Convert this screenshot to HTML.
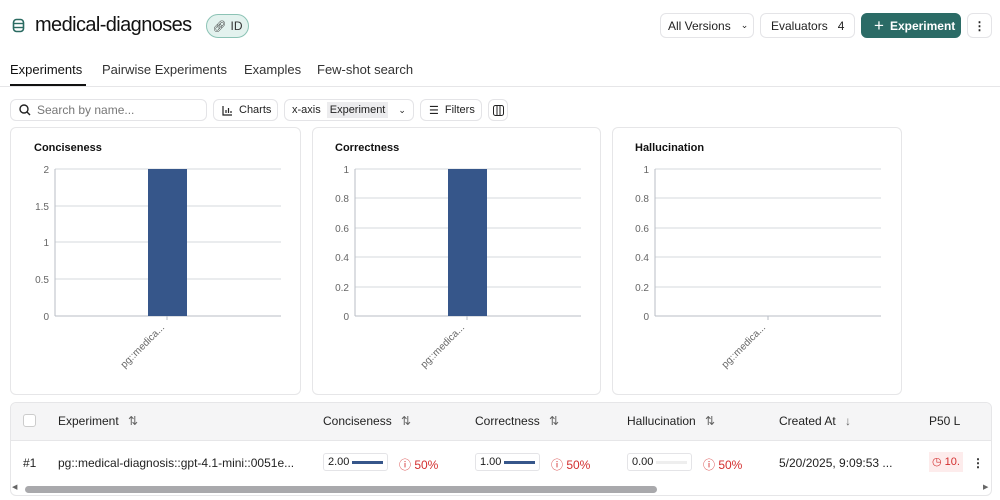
<!DOCTYPE html>
<html><head><meta charset="utf-8"><style>
*{box-sizing:border-box;margin:0;padding:0}
body{width:1000px;height:500px;background:#fff;font-family:"Liberation Sans",sans-serif;color:#1a1a1a;position:relative;overflow:hidden}
.a{position:absolute}
.btn{position:absolute;border:1px solid #e4e4e7;border-radius:6px;background:#fff;font-size:12px;display:flex;align-items:center;color:#222;white-space:nowrap}
.card{position:absolute;top:127px;height:268px;border:1px solid #e6e6e8;border-radius:6px;background:#fff}
.th{position:absolute;top:414px;font-size:12px;color:#222;white-space:nowrap}
.td{position:absolute;top:456px;font-size:12px;color:#222;white-space:nowrap}
.red{color:#d32f2f}
.mini{position:absolute;top:453px;width:65px;height:18px;border:1px solid #e4e4e7;border-radius:3px;font-size:11px;padding:0 4px;display:flex;align-items:center;white-space:nowrap}
.mini span{display:inline-block;width:32px;height:3px;background:#36568a;margin-left:3px}
</style></head><body>
<!-- header -->
<svg class="a" style="left:12px;top:18px" width="13" height="15" viewBox="0 0 13 15"><rect x="1.5" y="1.5" width="10" height="12" rx="3" fill="none" stroke="#2b6b62" stroke-width="1.6"/><line x1="2" y1="5.5" x2="11" y2="5.5" stroke="#2b6b62" stroke-width="1.4"/><line x1="2" y1="9.5" x2="11" y2="9.5" stroke="#2b6b62" stroke-width="1.4"/></svg>
<div class="a" style="left:35px;top:14px;font-size:20px;letter-spacing:-0.6px;color:#111;white-space:nowrap">medical-diagnoses</div>
<div class="a" style="left:206px;top:14px;width:43px;height:24px;border:1px solid #8cc3b5;background:#e3f2ee;border-radius:12px;font-size:12px;display:flex;align-items:center;justify-content:center;gap:4px;color:#333"><span style="font-size:11px">🔗︎</span>ID</div>
<div class="btn" style="left:660px;top:13px;width:94px;height:25px;padding-left:7px">All Versions <span style="margin-left:10px;font-size:9px">⌄</span></div>
<div class="btn" style="left:760px;top:13px;width:95px;height:25px;padding-left:10px">Evaluators <span style="margin-left:10px">4</span></div>
<div class="btn" style="left:861px;top:13px;width:100px;height:25px;background:#2b6b66;border-color:#2b6b66;color:#fff;font-weight:bold;padding-left:12px"><span style="font-size:17px;font-weight:normal;margin-right:6px">+</span>Experiment</div>
<div class="btn" style="left:967px;top:13px;width:25px;height:25px;justify-content:center;font-weight:bold">⋮</div>
<!-- tabs -->
<div class="a" style="left:10px;top:62px;font-size:13px;color:#111">Experiments</div>
<div class="a" style="left:10px;top:84px;width:76px;height:2px;background:#111"></div>
<div class="a" style="left:102px;top:62px;font-size:13px;color:#333">Pairwise Experiments</div>
<div class="a" style="left:244px;top:62px;font-size:13px;color:#333">Examples</div>
<div class="a" style="left:317px;top:62px;font-size:13px;color:#333">Few-shot search</div>
<div class="a" style="left:0;top:86px;width:1000px;height:1px;background:#e6e6e8"></div>
<!-- toolbar -->
<div class="btn" style="left:10px;top:99px;width:197px;height:22px;padding-left:8px;color:#777"><svg width="12" height="12" style="margin-right:6px"><circle cx="5" cy="5" r="4" fill="none" stroke="#222" stroke-width="1.4"/><line x1="8" y1="8" x2="11" y2="11" stroke="#222" stroke-width="1.4"/></svg>Search by name...</div>
<div class="btn" style="left:213px;top:99px;width:65px;height:22px;padding-left:8px;font-size:11px"><svg width="11" height="11" style="margin-right:6px"><path d="M1 1v9h9M4 8V5M6.5 8V3M9 8V6" fill="none" stroke="#222" stroke-width="1.2"/></svg>Charts</div>
<div class="btn" style="left:284px;top:99px;width:130px;height:22px;padding-left:7px;font-size:11px">x-axis <span style="background:#ececee;padding:2px 3px;margin-left:6px">Experiment</span><span style="margin-left:10px;font-size:9px">⌄</span></div>
<div class="btn" style="left:420px;top:99px;width:62px;height:22px;padding-left:8px;font-size:11px"><span style="margin-right:6px">☰</span>Filters</div>
<div class="btn" style="left:488px;top:99px;width:20px;height:22px;justify-content:center"><svg width="11" height="11"><rect x="0.5" y="0.5" width="10" height="10" rx="2" fill="none" stroke="#222"/><line x1="4" y1="1" x2="4" y2="10" stroke="#222"/><line x1="7" y1="1" x2="7" y2="10" stroke="#222"/></svg></div>
<!-- cards -->
<div class="card" style="left:10px;width:291px"></div>
<div class="card" style="left:312px;width:289px"></div>
<div class="card" style="left:612px;width:290px"></div>
<svg class="a" style="left:0;top:0" width="1000" height="400" font-family="Liberation Sans, sans-serif">
<g font-size="11" font-weight="bold" fill="#111"><text x="34" y="151">Conciseness</text><text x="335" y="151">Correctness</text><text x="635" y="151">Hallucination</text></g>
<g stroke="#dde0e4" stroke-width="1.2">
<line x1="55" y1="169" x2="281" y2="169"/><line x1="55" y1="206" x2="281" y2="206"/><line x1="55" y1="242" x2="281" y2="242"/><line x1="55" y1="279" x2="281" y2="279"/>
<line x1="355" y1="169" x2="581" y2="169"/><line x1="355" y1="198" x2="581" y2="198"/><line x1="355" y1="228" x2="581" y2="228"/><line x1="355" y1="257" x2="581" y2="257"/><line x1="355" y1="287" x2="581" y2="287"/>
<line x1="655" y1="169" x2="881" y2="169"/><line x1="655" y1="198" x2="881" y2="198"/><line x1="655" y1="228" x2="881" y2="228"/><line x1="655" y1="257" x2="881" y2="257"/><line x1="655" y1="287" x2="881" y2="287"/>
</g>
<g stroke="#b9bec6" stroke-width="1">
<line x1="55" y1="316" x2="281" y2="316"/><line x1="55" y1="169" x2="55" y2="316"/><line x1="167" y1="316" x2="167" y2="320"/>
<line x1="355" y1="316" x2="581" y2="316"/><line x1="355" y1="169" x2="355" y2="316"/><line x1="467" y1="316" x2="467" y2="320"/>
<line x1="655" y1="316" x2="881" y2="316"/><line x1="655" y1="169" x2="655" y2="316"/><line x1="768" y1="316" x2="768" y2="320"/>
</g>
<rect x="148" y="169" width="39" height="147" fill="#36568a"/>
<rect x="448" y="169" width="39" height="147" fill="#36568a"/>
<g font-size="10" fill="#666" text-anchor="end">
<text x="49" y="173">2</text><text x="49" y="210">1.5</text><text x="49" y="246">1</text><text x="49" y="283">0.5</text><text x="49" y="320">0</text>
<text x="349" y="173">1</text><text x="349" y="202">0.8</text><text x="349" y="232">0.6</text><text x="349" y="261">0.4</text><text x="349" y="291">0.2</text><text x="349" y="320">0</text>
<text x="649" y="173">1</text><text x="649" y="202">0.8</text><text x="649" y="232">0.6</text><text x="649" y="261">0.4</text><text x="649" y="291">0.2</text><text x="649" y="320">0</text>
<text transform="translate(165,328) rotate(-45)">pg::medica...</text>
<text transform="translate(465,328) rotate(-45)">pg::medica...</text>
<text transform="translate(766,328) rotate(-45)">pg::medica...</text>
</g>
</svg>
<!-- table -->
<div class="a" style="left:10px;top:402px;width:982px;height:94px;border:1px solid #e6e6e8;border-radius:6px;overflow:hidden">
<div class="a" style="left:0;top:0;width:982px;height:38px;background:#f5f5f6;border-bottom:1px solid #e6e6e8"></div>
</div>
<div class="a" style="left:23px;top:414px;width:13px;height:13px;border:1px solid #ccc;border-radius:3px;background:#fff"></div>
<div class="th" style="left:58px">Experiment <span style="color:#666;margin-left:6px">⇅</span></div>
<div class="th" style="left:323px">Conciseness <span style="color:#666;margin-left:6px">⇅</span></div>
<div class="th" style="left:475px">Correctness <span style="color:#666;margin-left:6px">⇅</span></div>
<div class="th" style="left:627px">Hallucination <span style="color:#666;margin-left:6px">⇅</span></div>
<div class="th" style="left:779px">Created At <span style="color:#666;margin-left:6px">↓</span></div>
<div class="th" style="left:929px">P50 L</div>
<div class="td" style="left:23px">#1</div>
<div class="td" style="left:58px">pg::medical-diagnosis::gpt-4.1-mini::0051e...</div>
<div class="mini" style="left:323px">2.00<span></span></div>
<div class="td red" style="left:399px">ⓘ 50%</div>
<div class="mini" style="left:475px">1.00<span></span></div>
<div class="td red" style="left:551px">ⓘ 50%</div>
<div class="mini" style="left:627px">0.00<span style="background:#eee"></span></div>
<div class="td red" style="left:703px">ⓘ 50%</div>
<div class="td" style="left:779px">5/20/2025, 9:09:53 ...</div>
<div class="a red" style="left:929px;top:452px;width:34px;height:20px;background:#fdecec;font-size:11px;padding:3px 3px;white-space:nowrap">◷ 10.</div>
<div class="td" style="left:972px;font-weight:bold">⋮</div>
<div class="a" style="left:12px;top:483px;font-size:7px;color:#666">◀</div>
<div class="a" style="left:25px;top:486px;width:632px;height:7px;background:#a9a9ac;border-radius:4px"></div>
<div class="a" style="left:983px;top:483px;font-size:7px;color:#666">▶</div>
</body></html>
